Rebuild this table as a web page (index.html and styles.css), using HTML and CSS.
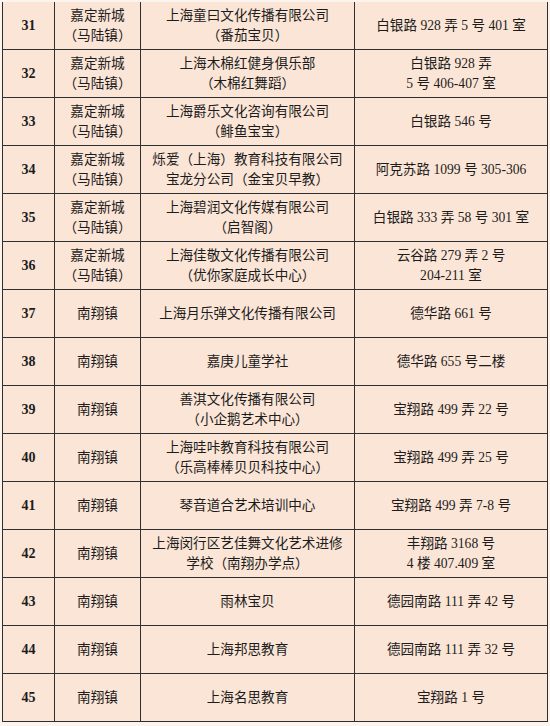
FILE: index.html
```html
<!DOCTYPE html>
<html lang="zh-CN">
<head>
<meta charset="utf-8">
<title>名单</title>
<link rel="stylesheet" href="styles.css">
</head>
<body>
<div class="sheet">
<table class="list">
  <colgroup>
    <col class="c-no"><col class="c-town"><col class="c-name"><col class="c-addr">
  </colgroup>
  <tbody>
    <tr><td class="num">31</td><td>嘉定新城<br>（马陆镇）</td><td>上海童曰文化传播有限公司<br>（番茄宝贝）</td><td>白银路 928 弄 5 号 401 室</td></tr>
    <tr><td class="num">32</td><td>嘉定新城<br>（马陆镇）</td><td>上海木棉红健身俱乐部<br>（木棉红舞蹈）</td><td>白银路 928 弄<br>5 号 406-407 室</td></tr>
    <tr><td class="num">33</td><td>嘉定新城<br>（马陆镇）</td><td>上海爵乐文化咨询有限公司<br>（鲱鱼宝宝）</td><td>白银路 546 号</td></tr>
    <tr><td class="num">34</td><td>嘉定新城<br>（马陆镇）</td><td>烁爱（上海）教育科技有限公司<br>宝龙分公司（金宝贝早教）</td><td>阿克苏路 1099 号 305-306</td></tr>
    <tr><td class="num">35</td><td>嘉定新城<br>（马陆镇）</td><td>上海碧润文化传媒有限公司<br>（启智阁）</td><td>白银路 333 弄 58 号 301 室</td></tr>
    <tr><td class="num">36</td><td>嘉定新城<br>（马陆镇）</td><td>上海佳敬文化传播有限公司<br>（优你家庭成长中心）</td><td>云谷路 279 弄 2 号<br>204-211 室</td></tr>
    <tr><td class="num">37</td><td>南翔镇</td><td>上海月乐弹文化传播有限公司</td><td>德华路 661 号</td></tr>
    <tr><td class="num">38</td><td>南翔镇</td><td>嘉庚儿童学社</td><td>德华路 655 号二楼</td></tr>
    <tr><td class="num">39</td><td>南翔镇</td><td>善淇文化传播有限公司<br>（小企鹅艺术中心）</td><td>宝翔路 499 弄 22 号</td></tr>
    <tr><td class="num">40</td><td>南翔镇</td><td>上海哇咔教育科技有限公司<br>（乐高棒棒贝贝科技中心）</td><td>宝翔路 499 弄 25 号</td></tr>
    <tr><td class="num">41</td><td>南翔镇</td><td>琴音道合艺术培训中心</td><td>宝翔路 499 弄 7-8 号</td></tr>
    <tr><td class="num">42</td><td>南翔镇</td><td>上海闵行区艺佳舞文化艺术进修<br>学校（南翔办学点）</td><td>丰翔路 3168 号<br>4 楼 407.409 室</td></tr>
    <tr><td class="num">43</td><td>南翔镇</td><td>雨林宝贝</td><td>德园南路 111 弄 42 号</td></tr>
    <tr><td class="num">44</td><td>南翔镇</td><td>上海邦思教育</td><td>德园南路 111 弄 32 号</td></tr>
    <tr><td class="num">45</td><td>南翔镇</td><td>上海名思教育</td><td>宝翔路 1 号</td></tr>
  </tbody>
</table>
</div>
</body>
</html>
```

FILE: styles.css
```css
html, body {
  margin: 0;
  padding: 0;
  background: #fbf4ef;
}

.sheet {
  padding: 2px 0 0 2px;
}

.list {
  border-collapse: collapse;
  table-layout: fixed;
  width: 545px;
  background: #fbe5d6;
  font-family: "Liberation Serif", "Noto Sans CJK SC", serif;
  font-size: 13.6px;
  line-height: 20px;
  color: #1c1c1c;
}

.c-no { width: 52px; }
.c-town { width: 86px; }
.c-name { width: 214px; }
.c-addr { width: 193px; }

.list td {
  border: 1px solid #2f2f2f;
  height: 47px;
  padding: 0;
  text-align: center;
  vertical-align: middle;
  white-space: nowrap;
}

.list tr:first-child td {
  border-top: none;
}

.list td.num {
  font-weight: bold;
  font-size: 14px;
}
```
